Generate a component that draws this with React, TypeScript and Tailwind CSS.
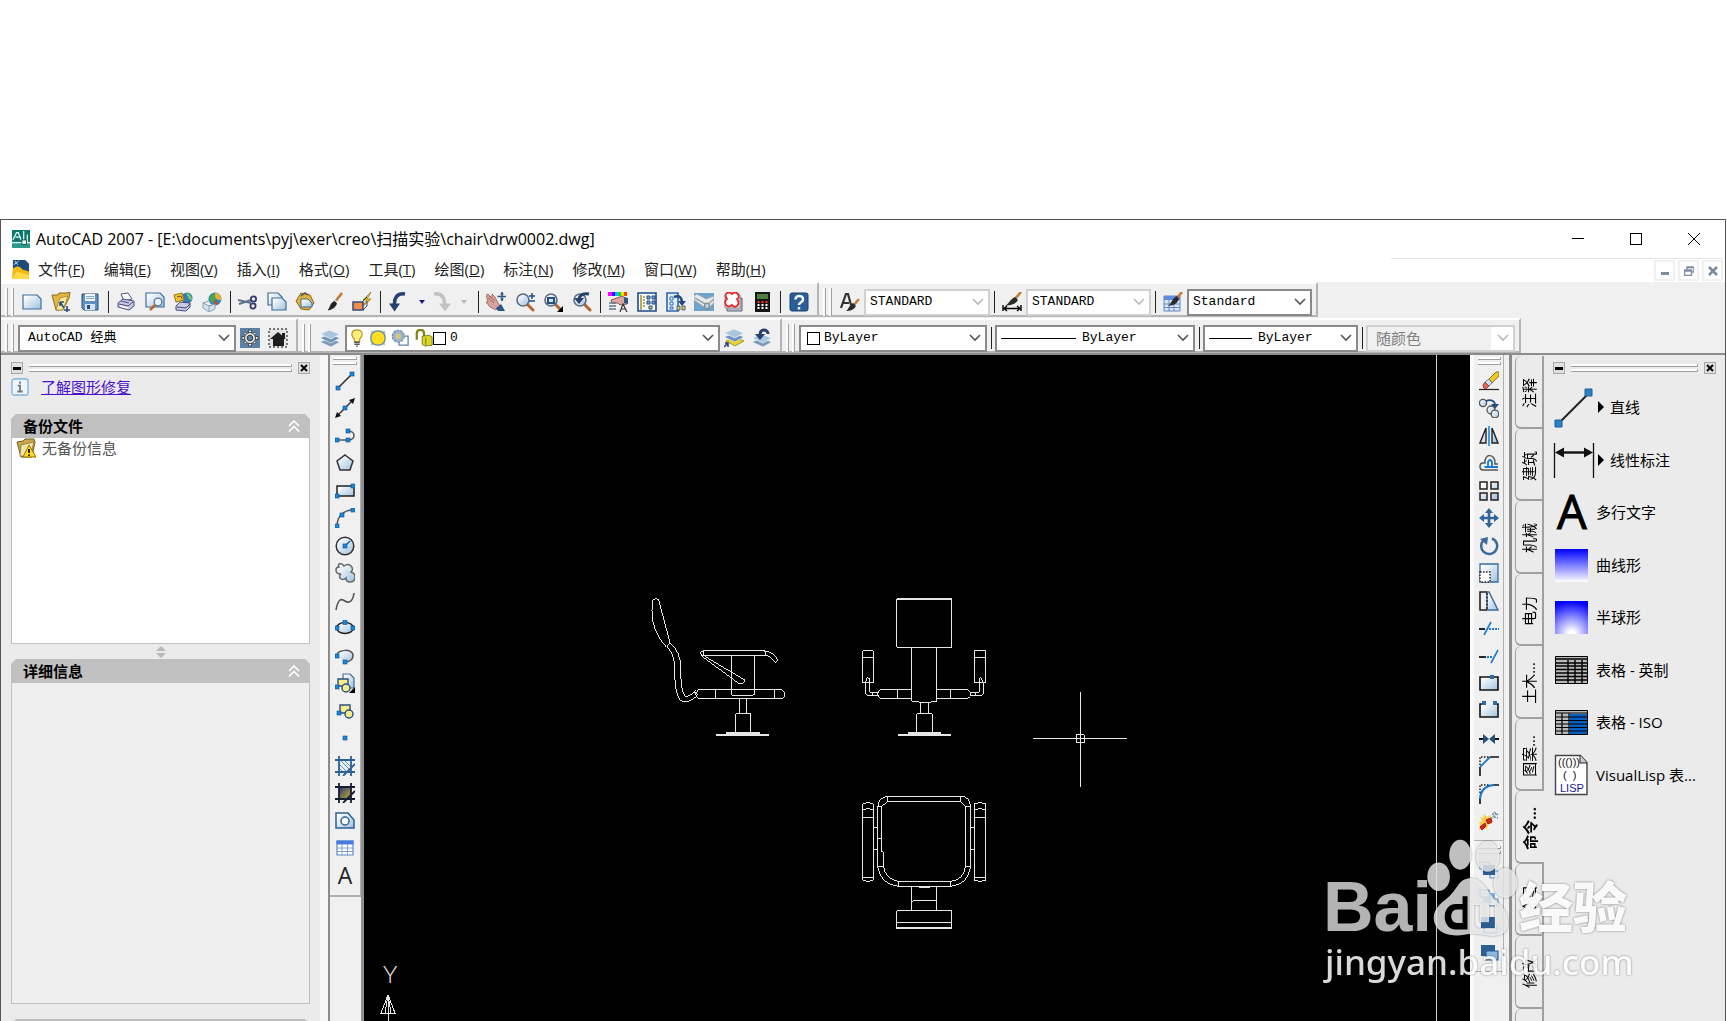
import React from "react";

const UI = "font-['Open_Sans','Noto_Sans_CJK_SC',sans-serif]";
const MONO = "font-['Liberation_Mono','Noto_Sans_CJK_SC',monospace]";

const dot = (x: number, y: number) => (
  <rect x={x - 2} y={y - 2} width="4" height="4" fill="#1a86dc" stroke="#0b4f8f" strokeWidth=".6" />
);

const sheet = (x: number, y: number, w: number, h: number) => (
  <path d={`M${x} ${y}h${w - 4}l4 4v${h - 4}h-${w}z`} fill="url(#pale)" stroke="#3f6e9c" strokeWidth="1.2" />
);

const magnifier = (
  <>
    <path d="M12.5 12.5l5.500 5.500" stroke="#b5652a" strokeWidth="3" strokeLinecap="round" />
    <circle cx="8" cy="8" r="6" fill="url(#pale)" stroke="#5d6d80" strokeWidth="1.600" />
  </>
);

const brush = (
  <>
    <path d="M19 1l-7 9" stroke="#c47a3a" strokeWidth="2.600" />
    <path d="M13 8l-2 3" stroke="#c9ced6" strokeWidth="3" />
    <path d="M11.500 9.500l2 2c-1 4-4 5-8 6.500c2-3 2-7 6-8.500z" fill="#222" stroke="#222" />
  </>
);

const calcKeys = [4, 8, 12].flatMap((x) => [10, 13, 16].map((y) => [x, y]));

const icons: Record<string, React.ReactNode> = {
  app: (
    <>
      <rect width="20" height="20" fill="#0f766b" />
      <path d="M0 13h20v7H0z" fill="#2c9b8e" />
      <path d="M1 11l4-8h2l3 8M4 8h6M13 1v12M0 14h20M17 5v10" stroke="#e6fffb" strokeWidth="1.300" fill="none" />
      <rect x="11" y="11" width="5" height="5" fill="#e6fffb" stroke="#0b5049" />
    </>
  ),
  drawing: (
    <>
      <path d="M2 0h13l4 4v10H2z" fill="#1d4a78" />
      <path d="M3 5l5-4M4 1l3 4" stroke="#cfe6fa" />
      <path d="M2 9c5-4 8-2 10 1l7 2v8H1z" fill="#f2b90f" />
      <path d="M1 20l5-8 13 4v4z" fill="#ffd94a" />
    </>
  ),
  new: sheet(1, 3, 18, 14),
  open: (
    <>
      <path d="M1 3h6l1-2h8l3-1-1 6-6 12H5z" fill="#e2b548" stroke="#8a6a1c" />
      <path d="M9 6l8-2-5 14H5z" fill="#fbe9a0" stroke="#a98328" strokeWidth=".8" />
      <path d="M9 10l4 6M9 10v4M9 10h4M13 18h6M16 14v6" stroke="#27507e" strokeWidth="1.600" />
    </>
  ),
  save: (
    <>
      <path d="M2 2h16v16H4l-2-2z" fill="#5f8fbc" stroke="#274f7c" />
      <path d="M5 2h10v7H5z" fill="#f2f8fd" />
      <path d="M6 4.500h8M6 6.500h8" stroke="#7ea3c8" />
      <path d="M5 12h10v6H5z" fill="#d4e3f1" />
      <path d="M7 13h3v4H7z" fill="#274f7c" />
    </>
  ),
  print: (
    <>
      <path d="M5 2l7-1 4 6-8 2z" fill="#fff" stroke="#50508c" />
      <path d="M2 11l5-4 11 2v5l-5 4L2 15z" fill="#c9cbe0" stroke="#4a4a85" />
      <path d="M3 12l9 2 5-4M5 9l8 2" stroke="#4a4a85" fill="none" />
      <path d="M4 14l8 2" stroke="#fff" strokeWidth="1.500" />
    </>
  ),
  preview: (
    <>
      {sheet(1, 1, 18, 14)}
      <circle cx="13" cy="10" r="3.800" fill="#e8f3fc" stroke="#60758b" strokeWidth="1.300" />
      <path d="M10 13l-5 5" stroke="#b5652a" strokeWidth="2.500" />
    </>
  ),
  publish: (
    <>
      <circle cx="14" cy="6" r="5.500" fill="#2e7fb5" />
      <path d="M13 1c4 1 6 4 6 7l-3-1z" fill="#8cc56b" />
      <path d="M1 3l8-2 2 7-8 2z" fill="#f0c633" stroke="#9b7410" />
      <path d="M4 5l4-1 1 3" stroke="#8a4a10" fill="none" />
      <path d="M3 14l4-4 10 1v4l-4 4-10-1z" fill="#c7cae0" stroke="#45457d" />
      <path d="M4 15l9 1 4-4" stroke="#45457d" fill="none" />
    </>
  ),
  web: (
    <>
      <circle cx="13" cy="7" r="6.500" fill="#2d83bf" />
      <path d="M13 .5c5 1 7 5 6 8l-6-2z" fill="#e9b12c" />
      <path d="M7 5l5-4 2 6-4 5z" fill="#4ba553" />
      <path d="M12 8l5 4-5 1z" fill="#cc4a2c" />
      <path d="M1 11l6 3 6-2v5l-6 3-6-4z" fill="#d5e3ec" stroke="#8aa1b1" />
      <path d="M1 11l6-2M7 14v6M7 14l6-2" stroke="#8aa1b1" fill="none" />
    </>
  ),
  cut: (
    <>
      <path d="M0 8l13 3M1 12l12-4" stroke="#60718e" strokeWidth="2" />
      <circle cx="15.500" cy="7" r="2.600" fill="none" stroke="#383871" strokeWidth="1.800" />
      <circle cx="15" cy="14" r="2.600" fill="none" stroke="#383871" strokeWidth="1.800" />
    </>
  ),
  copy: (
    <>
      {sheet(1, 1, 14, 12)}
      {sheet(5, 6, 14, 12)}
    </>
  ),
  paste: (
    <>
      <path d="M6 1l9 2 4 8-5 7-8-1-5-8z" fill="#e0b13f" stroke="#88651c" />
      <path d="M6 4l4-3 3 2" stroke="#555" fill="none" strokeWidth="1.500" />
      <path d="M6 7h7l4 4v4H6z" fill="url(#pale)" stroke="#3f6e9c" />
    </>
  ),
  match: brush,
  block: (
    <>
      <path d="M19 0l-8 8h4l-5 7 9-8h-4z" fill="#f4c81e" stroke="#9b7410" strokeWidth=".8" />
      <path d="M1 10h10v8H1z" fill="#f08c4a" stroke="#2f4b78" strokeWidth="1.500" />
      <path d="M10 10l5-5M15 9v5l-4 4" fill="none" stroke="#2f4b78" />
    </>
  ),
  undo: (
    <>
      <path d="M17 2C9 1 6 6 6.500 13" stroke="#27406e" strokeWidth="3.500" fill="none" />
      <path d="M1 11.500h11l-5.500 8z" fill="#27406e" />
    </>
  ),
  redo: (
    <>
      <path d="M1 2c8-1 11 4 10.500 11" stroke="#c2c2c2" strokeWidth="3.500" fill="none" />
      <path d="M6 11.500h12l-6 8z" fill="#c2c2c2" />
    </>
  ),
  pan: (
    <>
      <path d="M0 3l2-1 4 4V2l3 3 3 6 2 3-4 4-6-3-4-5 2 0z" fill="#d8a39b" stroke="#93605a" strokeWidth=".8" />
      <path d="M2 6l6 5M3 4l6 5" stroke="#93605a" strokeWidth=".8" />
      <path d="M10 16l5-4 4 7h-7z" fill="#2c5684" />
      <path d="M16 0v9M11.500 4.500h8.500" stroke="#2c5684" strokeWidth="1.500" />
      <path d="M14 2.500l2-2.500 2 2.500M14 6.500l2 2.500 2-2.500" fill="#2c5684" />
    </>
  ),
  zoomRt: (
    <>
      {magnifier}
      <path d="M14 4h6M17 1v6M14 9h6" stroke="#1f4f85" strokeWidth="1.500" />
    </>
  ),
  zoomWin: (
    <>
      {magnifier}
      <path d="M5 6h6v5H5z" fill="none" stroke="#27507e" strokeWidth="2" />
      <path d="M20 14v6h-6z" fill="#000" />
    </>
  ),
  zoomPrev: (
    <>
      {magnifier}
      <path d="M17 2c-5-1-9 0-10 5" stroke="#27406e" strokeWidth="3" fill="none" />
      <path d="M2 6h10l-5 6z" fill="#27406e" />
    </>
  ),
  props: (
    <>
      <path d="M0 0h4v4H0z" fill="#f0f" />
      <path d="M4 0h3v4H4z" fill="#40f" />
      <path d="M7 0h3v4H7z" fill="#0bf" />
      <path d="M10 0h3v4h-3z" fill="#0d4" />
      <path d="M13 0h3v4h-3z" fill="#fd0" />
      <path d="M16 0h3v4h-3z" fill="#f40" />
      <path d="M3 8l6-2 5-2 5 3v5l-7 1-2-2H4z" fill="#dba79e" stroke="#7d4a45" strokeWidth=".9" />
      <path d="M16 5l4 1v6l-4-1z" fill="#2c5684" />
      <path d="M1 11h7M1 14h7M1 17h7" stroke="#5c7896" strokeWidth="1.500" />
      <path d="M12 20l3-8 4 8M13 17h5" stroke="#333" strokeWidth="1.200" fill="none" />
    </>
  ),
  design: (
    <>
      <path d="M1 1h18v18H1z" fill="#f3f8fd" stroke="#214a80" strokeWidth="1.600" />
      <path d="M4 3v15M6 5h2M6 8h2M6 11h2M6 14h2" stroke="#a89023" strokeWidth="1.500" />
      <path d="M10 4h3v3h-3zM15 4h3v3h-3zM10 9h3v3h-3zM15 9h3v3h-3z" fill="#7fa9d4" stroke="#214a80" />
      <path d="M12 14h3v3h-3z" fill="#e8cc37" stroke="#214a80" />
    </>
  ),
  palettes: (
    <>
      <path d="M1 1h11v18H1z" fill="#e2eefb" stroke="#2c66ac" strokeWidth="1.600" />
      <path d="M4 5h3v3H4zM4 10h3v3H4zM4 15h3v2H4z" fill="#fff" stroke="#2c66ac" />
      <path d="M8 5c6-2 8 1 8 6" stroke="#214a80" strokeWidth="2.500" fill="none" />
      <path d="M12 9h8l-4 5z" fill="#214a80" />
      <path d="M11 14h3v4h-3zM16 14h3v4h-3z" fill="#e8cc37" stroke="#214a80" strokeWidth=".8" />
    </>
  ),
  sheetset: (
    <>
      <path d="M0 1h20v18H0z" fill="#6fa3cc" />
      <path d="M0 4l3-2 9 5 8-3v7l-7 6L0 8z" fill="#e6eaec" stroke="#a3adb3" />
      <path d="M1 6l12 7 7-6" stroke="#9aa5ac" fill="none" strokeWidth="1.500" />
      <ellipse cx="13" cy="14" rx="2.500" ry="3" fill="#c2cacf" stroke="#6a7a85" />
    </>
  ),
  markup: (
    <>
      <path d="M4 6h15v13H4z" fill="#b3bac3" stroke="#5b6672" />
      <path d="M2 3h15v13H2z" fill="#f6f0f0" stroke="#89919c" />
      <path d="M4 1q3-1 5 1q3-3 6 0q2 4-1 5q3 4 0 7q-3 2-5-1q-3 3-6 0q-2-4 1-6q-3-4 0-6z" fill="#fff" stroke="#e32828" strokeWidth="1.800" />
    </>
  ),
  calc: (
    <>
      <path d="M3 0h15v20H3z" fill="#161616" />
      <path d="M5 2h11v5H5z" fill="#4e7d3f" />
      {calcKeys.map(([x, y]) => (
        <rect key={`${x}-${y}`} x={x + 1.5} y={y - 1} width="2" height="2" fill={y === 10 ? "#f33" : "#fff"} />
      ))}
    </>
  ),
  help: (
    <>
      <rect x="1" y="1" width="18" height="18" rx="2" fill="#2a5f98" stroke="#1c426e" />
      <path d="M6.500 7.500c0-5 8-4.500 7.500 0c0 3-4 2.500-4 5.500M10 15v2.500" stroke="#fff" strokeWidth="2.400" fill="none" />
    </>
  ),
  textStyle: (
    <>
      <path d="M1 16L6 2h2l3 11M3 11h6" stroke="#333" strokeWidth="2.200" fill="none" />
      <path d="M19 7l-6 7" stroke="#c47a3a" strokeWidth="2.500" />
      <path d="M13 11l3 3c-2 4-6 5-10 5c3-2 3-6 7-8z" fill="#2b2b2b" />
    </>
  ),
  dimStyle: (
    <>
      <path d="M19 0l-6 7" stroke="#c47a3a" strokeWidth="2.600" />
      <path d="M13 5l3 3c-2 4-7 5-13 6c4-2 5-7 10-9z" fill="#2b2b2b" />
      <path d="M1 13v6M19 13v6M2 16.500h16M5 14l-3 2.500 3 2.500M15 14l3 2.500-3 2.500" stroke="#000" strokeWidth="1.400" fill="none" />
    </>
  ),
  tableStyle: (
    <>
      <path d="M1 4h16v15H1z" fill="#dbe8fa" stroke="#5f86c8" />
      <path d="M1 4h16v4H1z" fill="#5f8be0" />
      <path d="M1 12h16M1 15.500h16M6 8v11M11 8v11" stroke="#5f86c8" />
      <path d="M19 0l-5 6" stroke="#c47a3a" strokeWidth="2.600" />
      <path d="M14 4l2 3c-2 5-5 6-11 7c4-3 4-8 9-10z" fill="#2b2b2b" />
    </>
  ),
  gear: (
    <>
      <path d="M0 0h20v20H0z" fill="#5c81a6" />
      <path d="M8.500 2h3v16h-3zM2 8.500h16v3H2zM4 5.500L5.500 4 16 14.500 14.500 16zM14.500 4L16 5.500 5.500 16 4 14.500z" fill="#ececec" stroke="#333" strokeWidth=".8" />
      <circle cx="10" cy="10" r="5.500" fill="#e0e4e8" stroke="#444" />
      <circle cx="10" cy="10" r="2.800" fill="#5c81a6" stroke="#333" />
    </>
  ),
  home: (
    <>
      <rect x="1" y="1" width="18" height="18" fill="#e4e4e4" stroke="#777" strokeWidth="2" strokeDasharray="2 2" />
      <path d="M10 4l8 7h-2v7H5v-7H2z" fill="#1d1d1d" />
      <path d="M14 5h3v5h-3z" fill="#1d1d1d" />
    </>
  ),
  layers: (
    <>
      <path d="M0 14l9-4 11 4-9 5z" fill="#7d9bb8" stroke="#fff" strokeWidth=".6" />
      <path d="M0 10l9-4 11 4-9 5z" fill="#6d93b8" stroke="#fff" strokeWidth=".6" />
      <path d="M0 6l9-4 11 4-9 5z" fill="#a9c6df" stroke="#fff" strokeWidth=".6" />
    </>
  ),
  layerCur: (
    <>
      <path d="M2 13l9-4 9 4-9 5z" fill="#e8cf2d" stroke="#9a8a1a" strokeWidth=".8" />
      <path d="M0 9l10-4 10 4-9 5z" fill="#6d93b8" stroke="#fff" strokeWidth=".6" />
      <path d="M0 5l10-4 10 4-9 5z" fill="#a9c6df" stroke="#fff" strokeWidth=".6" />
      <path d="M0 19l4-4M1 15h3v4" stroke="#204070" strokeWidth="1.500" fill="none" />
    </>
  ),
  layerPrev: (
    <>
      <path d="M0 14l9-4 11 4-9 5z" fill="#7d9bb8" stroke="#fff" strokeWidth=".6" />
      <path d="M0 10l9-4 11 4-9 5z" fill="#a9c6df" stroke="#fff" strokeWidth=".6" />
      <path d="M16 6c0-5-8-6-8 1" stroke="#27406e" strokeWidth="3" fill="none" />
      <path d="M3 6h10l-5 6z" fill="#27406e" />
    </>
  ),
  bulb: (
    <>
      <path d="M10 1c7 0 7 7 3 10v3H7v-3C3 8 3 1 10 1z" fill="#ffef7a" stroke="#b49321" strokeWidth="1.200" />
      <path d="M7 15h6M7 17h6M9 19h2" stroke="#4f5966" strokeWidth="1.500" />
    </>
  ),
  sun: (
    <>
      <path d="M2 2h16v16H2z" fill="#b7c9b7" />
      <circle cx="10" cy="10" r="8" fill="#ffdf1e" stroke="#5d8aa8" strokeWidth="1.400" />
    </>
  ),
  vpFreeze: (
    <>
      <path d="M9 8h10v10H9z" fill="#fff" stroke="#5d86ad" strokeWidth="1.400" />
      <circle cx="8" cy="8" r="6.500" fill="#9cb5c9" stroke="#7290ab" strokeWidth="1.500" strokeDasharray="3 1" />
      <circle cx="8" cy="8" r="3" fill="#d6c77a" />
    </>
  ),
  lock: (
    <>
      <path d="M2 12V5q0-4 4-4t4 4v3" fill="none" stroke="#83831a" strokeWidth="2.500" />
      <path d="M8 8l8-1 3 2v9l-8 1-3-2z" fill="#d7d52a" stroke="#77761a" />
      <path d="M12 10v8" stroke="#77761a" />
    </>
  ),
  line: (
    <>
      <path d="M3 17L17 3" stroke="#333" strokeWidth="1.600" />
      {dot(3, 17)}
      {dot(17, 3)}
    </>
  ),
  xline: (
    <>
      <path d="M2 18L18 2" stroke="#333" strokeWidth="1.400" />
      <path d="M20 0l-2 6-4-4zM0 20l2-6 4 4z" fill="#111" />
      {dot(10, 10)}
    </>
  ),
  pline: (
    <>
      <path d="M2 14h11c8 0 8-9 0-9" stroke="#555" strokeWidth="1.500" fill="none" />
      {dot(2, 14)}
      {dot(13, 14)}
      {dot(13, 5)}
    </>
  ),
  polygon: <path d="M10 2l8 6-3 9H5L2 8z" fill="url(#pale)" stroke="#333" strokeWidth="1.500" />,
  rect: (
    <>
      <path d="M2 5h17v10H2z" fill="url(#pale)" stroke="#222" strokeWidth="1.500" />
      {dot(2, 15)}
      {dot(18, 5)}
    </>
  ),
  arc: (
    <>
      <path d="M2 18C2 9 8 2 18 2" stroke="#555" strokeWidth="1.500" fill="none" />
      {dot(2, 18)}
      {dot(7, 7)}
      {dot(18, 2)}
    </>
  ),
  circle: (
    <>
      <circle cx="10" cy="10" r="8.800" fill="url(#pale)" stroke="#333" strokeWidth="1.500" />
      <path d="M10 10l5-5" stroke="#1a5fa8" strokeWidth="1.500" />
      {dot(10, 10)}
    </>
  ),
  cloud: (
    <path
      d="M4 1q3-1 5 2q4-3 7 0q3 3 0 6q4 1 4 5q0 5-5 5q-4 0-4-4q-3 3-6 0q-1-3 1-4q-5 0-5-4q0-3 3-3q-1-2 0-3z"
      fill="url(#pale)"
      stroke="#666"
      strokeWidth="1.500"
    />
  ),
  spline: <path d="M1 19C3 8 6 7 10 10s8 0 9-8" stroke="#555" strokeWidth="1.600" fill="none" />,
  ellipse: (
    <>
      <ellipse cx="10" cy="10" rx="8.500" ry="5.500" fill="url(#pale)" stroke="#222" strokeWidth="1.500" />
      {dot(2, 10)}
      {dot(18, 10)}
      {dot(10, 4.5)}
    </>
  ),
  ellipseArc: (
    <>
      <path d="M2 10C1 3 19 2 18 10c0 4-4 6-8 6" fill="url(#pale)" stroke="#555" strokeWidth="1.500" />
      {dot(2, 10)}
      {dot(10, 16)}
    </>
  ),
  insert: (
    <>
      {sheet(8, 1, 11, 14)}
      <path d="M3 6h10v7H3z" fill="#f5ec8d" stroke="#27507e" strokeWidth="1.400" />
      <circle cx="11" cy="15" r="4" fill="#f5ec8d" stroke="#27507e" strokeWidth="1.400" />
      {dot(2, 14)}
      <path d="M20 14v6h-6z" fill="#000" />
    </>
  ),
  makeBlock: (
    <>
      <path d="M5 4h10v8H5z" fill="#f5ec8d" stroke="#27507e" strokeWidth="1.400" />
      <circle cx="14" cy="13" r="4" fill="#f5ec8d" stroke="#27507e" strokeWidth="1.400" />
      {dot(4, 12)}
    </>
  ),
  point: dot(10, 10),
  hatch: (
    <>
      <path d="M4 4h12v12H4z" fill="#e5eef6" />
      <path d="M5 4l11 11M4 8l8 8M9 4l7 7M4 12l4 4" stroke="#6f8fae" />
      <path d="M4 0v20M16 0v20M0 4h20M0 16h20M20 8L8 20" stroke="#2c6196" strokeWidth="1.800" fill="none" />
    </>
  ),
  gradient: (
    <>
      <path d="M4 4h12v12H4z" fill="url(#dusk)" />
      <path d="M4 0v20M16 0v20M0 4h20M0 16h20M20 8L8 20" stroke="#141d33" strokeWidth="1.800" fill="none" />
    </>
  ),
  region: (
    <>
      <path d="M1 2h12l6 7v8H1z" fill="url(#pale)" stroke="#2c6196" strokeWidth="1.500" />
      <circle cx="10" cy="10" r="4" fill="#fff" stroke="#2c6196" strokeWidth="1.500" />
    </>
  ),
  table: (
    <>
      <path d="M2 3h16v14H2z" fill="#fff" stroke="#5f86c8" strokeWidth="1.200" />
      <path d="M1.500 2.500h17v4h-17z" fill="#4c7be0" />
      <path d="M2 10h16M2 13.500h16M7 6v11M12.500 6v11" stroke="#86a2cc" />
    </>
  ),
  erase: (
    <>
      <path d="M0 18.500h20" stroke="#222" strokeWidth="1.200" />
      <path d="M10 8L17 1h3v4l-7 7z" fill="#f0c52a" stroke="#7d6a1c" strokeWidth=".9" />
      <path d="M10 8l3 4-3 3-4-4z" fill="#d5e2ee" stroke="#4d6c8b" strokeWidth=".8" />
      <path d="M6 11l4 4-3 3q-3 0-3-4z" fill="#e2675a" stroke="#8a3128" strokeWidth=".8" />
    </>
  ),
  copyObj: (
    <>
      <circle cx="4" cy="5" r="3.600" fill="url(#pale)" stroke="#555" strokeWidth="1.300" />
      <path d="M7 3c5-2 9 0 9 4" stroke="#214a80" strokeWidth="1.800" fill="none" />
      <path d="M12 6h8l-4 5z" fill="#214a80" />
      <circle cx="12" cy="12" r="4" fill="url(#pale)" stroke="#555" strokeWidth="1.300" />
      <circle cx="16" cy="16" r="3.800" fill="url(#pale)" stroke="#555" strokeWidth="1.300" />
    </>
  ),
  mirror: (
    <>
      <path d="M7 2v15H1zM13 2v15h6z" fill="url(#pale)" stroke="#222" strokeWidth="1.400" />
      <path d="M10 0v20" stroke="#1a86dc" strokeWidth="1.600" />
    </>
  ),
  offset: (
    <>
      <path d="M19 11h-3c1-11-11-11-10-1H4q-3 0-3 3.500T4 17h15" fill="none" stroke="#555" strokeWidth="1.500" />
      <path d="M19 14H5.500M9 13V9q2-4 4 0v4" fill="none" stroke="#1a7bd0" strokeWidth="1.800" />
    </>
  ),
  array: (
    <path d="M1 1h7v7H1zM12 1h7v7h-7zM1 12h7v7H1zM12 12h7v7h-7z" fill="url(#pale)" stroke="#222" strokeWidth="1.500" />
  ),
  move: (
    <>
      <path d="M10 2v16M2 10h16" stroke="#2f6599" strokeWidth="2.600" />
      <path d="M10 0l4 5H6zM10 20l4-5H6zM0 10l5-4v8zM20 10l-5-4v8z" fill="#2f6599" />
    </>
  ),
  rotate: (
    <>
      <path d="M13 2.500a8 8 0 1 1-7.500 1" fill="none" stroke="#3c6a98" strokeWidth="2.500" />
      <path d="M1 3l8-2-1 8z" fill="#3c6a98" />
    </>
  ),
  scale: (
    <>
      <path d="M1 1h18v18H1z" fill="url(#pale)" stroke="#3c6a98" strokeWidth="1.300" />
      <path d="M1 9h10v10H1z" fill="#fff" stroke="#222" strokeWidth="1.400" strokeDasharray="1.500 1.500" />
    </>
  ),
  stretch: (
    <>
      <path d="M8 1h2l9 18H8z" fill="url(#pale)" stroke="#3c6a98" strokeWidth="1.400" />
      <path d="M8 1H1v18h7" fill="none" stroke="#222" strokeWidth="1.600" />
      <path d="M8 2v17" stroke="#222" strokeWidth="1.400" strokeDasharray="2 1.500" />
    </>
  ),
  trim: (
    <>
      <path d="M0 10h6" stroke="#111" strokeWidth="1.800" />
      <path d="M5 16L12 3" stroke="#1a7bd0" strokeWidth="1.600" />
      <path d="M10 10h10" stroke="#1a7bd0" strokeWidth="1.800" strokeDasharray="2 1" />
    </>
  ),
  extend: (
    <>
      <path d="M0 11h7" stroke="#111" strokeWidth="1.800" />
      <path d="M12 17l7-13" stroke="#1a7bd0" strokeWidth="1.600" />
      <path d="M8 11h6" stroke="#1a7bd0" strokeWidth="1.800" strokeDasharray="2 1" />
    </>
  ),
  breakPt: (
    <>
      <path d="M1 3h18v13H1z" fill="url(#pale)" stroke="#111" strokeWidth="1.600" />
      <path d="M11 1h4v4h-4z" fill="#2c6ba5" />
    </>
  ),
  breakObj: (
    <>
      <path d="M2 3h16v13H2z" fill="url(#pale)" />
      <path d="M4 3H1v13h18V3h-3" fill="none" stroke="#111" strokeWidth="1.600" />
      <path d="M3 0h4v4H3zM14 0h4v4h-4z" fill="#2c6ba5" />
    </>
  ),
  join: (
    <>
      <path d="M0 10h6M14 10h6" stroke="#111" strokeWidth="2.200" />
      <path d="M4 5l6 5-6 5zM16 5l-6 5 6 5z" fill="#27507e" />
    </>
  ),
  chamfer: (
    <>
      <path d="M1 20V11M11 1h9" stroke="#111" strokeWidth="1.600" />
      <path d="M1 11L11 1" stroke="#1a7bd0" strokeWidth="1.800" />
      <path d="M1 9V1h9" stroke="#111" strokeWidth="1.400" strokeDasharray="1.500 1.500" fill="none" />
    </>
  ),
  fillet: (
    <>
      <path d="M1 20v-6M14 1h6" stroke="#111" strokeWidth="1.600" />
      <path d="M1 15Q2 2 15 1" stroke="#1a7bd0" strokeWidth="2.200" fill="none" />
      <path d="M1 9V1h9" stroke="#111" strokeWidth="1.400" strokeDasharray="1.500 1.500" fill="none" />
    </>
  ),
  explode: (
    <>
      <path d="M1 6l3 1 1-4 3 3 4-2-1 5 2 4-4 0-1 6-3-3-5 3 1-5-1-3 3-1z" fill="#f7cf4a" />
      <path d="M1 16l5-4 1 3-4 4zM7 9l5-2 1 4-4 2z" fill="#d6261f" stroke="#a31712" />
      <path d="M12 8l5-5M15 1l4 3M15 6l4 1M13 3h5" stroke="#7590a8" strokeWidth="1.500" strokeDasharray="2 1" />
    </>
  ),
  orderFront: (
    <>
      <path d="M1 2h9v7H1zM11 11h8v7h-8z" fill="#e8f1f8" stroke="#5d9acb" strokeWidth="1.200" />
      <path d="M4 5h12v10H4z" fill="#2c5f94" />
    </>
  ),
  orderBack: (
    <>
      <path d="M4 5h12v10H4z" fill="#86b3da" />
      <path d="M1 2h9v7H1zM11 11h8v7h-8z" fill="#e8f1f8" stroke="#5d9acb" strokeWidth="1.200" />
    </>
  ),
  orderAbove: (
    <>
      <path d="M5 9h13v9H5z" fill="#e8f1f8" stroke="#5d9acb" strokeWidth="1.200" />
      <path d="M2 2h14v11H2z" fill="#2c5f94" />
    </>
  ),
  orderUnder: (
    <>
      <path d="M2 2h14v11H2z" fill="#2c5f94" />
      <path d="M7 8h12v9H7z" fill="#8fb9de" stroke="#2c6196" strokeWidth="1.200" />
    </>
  ),
  info: (
    <>
      <rect x="1" y="1" width="18" height="18" rx="3" fill="#eef6fd" stroke="#8fbbe4" strokeWidth="1.800" />
      <path d="M10 4v2.500M7.500 8.500H10V15M7 15h6" stroke="#777" strokeWidth="2" fill="none" />
    </>
  ),
  recover: (
    <>
      <path d="M1 4l6-1 2-2h9l1 3-3 15H5z" fill="#c9a64a" stroke="#776026" />
      <path d="M5 7l13-3-4 14H4z" fill="#f2e4b0" stroke="#8f7734" strokeWidth=".8" />
      <path d="M13 7l7 12H7z" fill="#ffdb1f" stroke="#8c7300" strokeLinejoin="round" />
      <path d="M13 11v4M13 16.500v1.500" stroke="#111" strokeWidth="1.800" />
    </>
  ),
};

function Icon({ name, className = "size-5" }: { name: string; className?: string }) {
  return (
    <svg viewBox="0 0 20 20" fill="none" className={`shrink-0 ${className}`} aria-hidden="true">
      {icons[name]}
    </svg>
  );
}

type Tool = [icon: string, label: string];

function ToolButton({ tool: [icon, label] }: { tool: Tool }) {
  return (
    <button type="button" aria-label={label} className="flex items-center justify-center">
      <Icon name={icon} />
    </button>
  );
}

function Tools({ items, className }: { items: Tool[]; className: string }) {
  return (
    <div className={`grid h-7 shrink-0 auto-cols-fr grid-flow-col ${className}`}>
      {items.map((t) => (
        <ToolButton key={t[0]} tool={t} />
      ))}
    </div>
  );
}

function ToolColumn({ items, className }: { items: Tool[]; className: string }) {
  return (
    <div className={`grid shrink-0 auto-rows-fr ${className}`}>
      {items.map((t) => (
        <ToolButton key={t[0]} tool={t} />
      ))}
    </div>
  );
}

const Separator = () => (
  <div className="flex w-2 shrink-0 justify-center">
    <div className="h-[22px] w-px bg-[#222]" />
  </div>
);

const Grip = () => (
  <div className="flex h-7 w-[17px] shrink-0 gap-[3px] pl-1">
    <div className="w-[3px] border-r border-l border-r-[#a0a0a0] border-l-white bg-[#f8f8f8]" />
    <div className="w-[3px] border-r border-l border-r-[#a0a0a0] border-l-white bg-[#f8f8f8]" />
  </div>
);

const FlatGrip = ({ className = "" }: { className?: string }) => (
  <div className={`flex flex-col gap-[2px] ${className}`}>
    <div className="h-[3px] border-r border-b border-[#a0a0a0] bg-white" />
    <div className="h-[3px] border-r border-b border-[#a0a0a0] bg-white" />
  </div>
);

function Bar({ children }: { children: React.ReactNode }) {
  return (
    <div className="flex h-[35px] shrink-0 items-center border-t-2 border-r-2 border-b-2 border-t-white border-r-[#b5b5b5] border-b-[#b5b5b5] bg-[#f0f0f0] pt-[5px] pr-1">
      {children}
    </div>
  );
}

interface ComboProps {
  label: string;
  value: string;
  className: string;
  soft?: boolean;
  lead?: React.ReactNode;
}

function Combo({ label, value, className, soft, lead }: ComboProps) {
  return (
    <div
      className={`flex h-[27px] shrink-0 items-center border-2 bg-white ${soft ? "border-[#d0d0d0]" : "border-[#8a8a8a]"} ${className}`}
    >
      {lead}
      <select aria-label={label} defaultValue={value} className={`min-w-0 flex-1 appearance-none bg-transparent text-[13px] leading-5 text-black ${MONO}`}>
        <option>{value}</option>
      </select>
      <Chevron soft={soft} />
    </div>
  );
}

const Chevron = ({ soft }: { soft?: boolean }) => (
  <svg viewBox="0 0 12 8" className={`pointer-events-none mr-1 h-2 w-3 shrink-0 ${soft ? "text-[#b8b8b8]" : "text-[#555]"}`} aria-hidden="true">
    <path d="M1 1l5 5 5-5" fill="none" stroke="currentColor" strokeWidth="1.600" />
  </svg>
);

const Swatch = () => <span className="mx-1 size-[13px] shrink-0 border border-black bg-white" />;

const Caret = ({ className }: { className: string }) => (
  <button type="button" aria-label="历史" className={`flex h-7 shrink-0 items-center justify-center ${className}`}>
    <svg viewBox="0 0 6 4" className="h-1 w-1.5" aria-hidden="true">
      <path d="M0 0h6L3 4z" fill="currentColor" />
    </svg>
  </button>
);

const menus: [string, string][] = [
  ["文件", "F"], ["编辑", "E"], ["视图", "V"], ["插入", "I"], ["格式", "O"], ["工具", "T"],
  ["绘图", "D"], ["标注", "N"], ["修改", "M"], ["窗口", "W"], ["帮助", "H"],
];

const drawTools: Tool[] = [
  ["line", "直线"], ["xline", "构造线"], ["pline", "多段线"], ["polygon", "正多边形"], ["rect", "矩形"],
  ["arc", "圆弧"], ["circle", "圆"], ["cloud", "修订云线"], ["spline", "样条曲线"], ["ellipse", "椭圆"],
  ["ellipseArc", "椭圆弧"], ["insert", "插入块"], ["makeBlock", "创建块"], ["point", "点"], ["hatch", "图案填充"],
  ["gradient", "渐变色"], ["region", "面域"], ["table", "表格"],
];

const modifyTools: Tool[] = [
  ["erase", "删除"], ["copyObj", "复制"], ["mirror", "镜像"], ["offset", "偏移"], ["array", "阵列"],
  ["move", "移动"], ["rotate", "旋转"], ["scale", "缩放"], ["stretch", "拉伸"], ["trim", "修剪"],
  ["extend", "延伸"], ["breakPt", "打断于点"], ["breakObj", "打断"], ["join", "合并"], ["chamfer", "倒角"],
  ["fillet", "圆角"], ["explode", "分解"],
];

const orderTools: Tool[] = [
  ["orderFront", "前置"], ["orderBack", "后置"], ["orderAbove", "置于对象之上"], ["orderUnder", "置于对象之下"],
];

const tabs = ["注释", "建筑", "机械", "电力", "土木...", "图案...", "命令...", "绘图", "修改", ""];

function TitleBar() {
  const button = "flex h-9 w-[58px] items-center justify-center";
  return (
    <header className="flex h-[38px] shrink-0 items-center bg-white pr-0.5 pb-px pl-[11px]">
      <Icon name="app" className="size-[18px]" />
      <h1 className={`ml-1.5 flex-1 text-base leading-5 text-black ${UI}`}>
        AutoCAD 2007 - [E:\documents\pyj\exer\creo\扫描实验\chair\drw0002.dwg]
      </h1>
      <button type="button" aria-label="最小化" className={button}>
        <span className="h-px w-3 bg-black" />
      </button>
      <button type="button" aria-label="最大化" className={button}>
        <span className="size-3 border border-black" />
      </button>
      <button type="button" aria-label="关闭" className={button}>
        <svg viewBox="0 0 12 12" className="size-3" aria-hidden="true">
          <path d="M0 0l12 12M12 0L0 12" stroke="#000" />
        </svg>
      </button>
    </header>
  );
}

function MenuBar() {
  const mdi = "flex size-[21px] items-center justify-center border-2 border-[#f0f0f0] text-[#7d8da0]";
  return (
    <div className="flex h-6 shrink-0 items-center justify-between bg-white pr-0.5 pl-2.5">
      <nav className={`flex items-center gap-[19px] pb-0.5 text-[15px] leading-5 text-[#222] ${UI}`}>
        <Icon name="drawing" className="-mr-[11px] size-[19px]" />
        {menus.map(([name, key]) => (
          <button key={key} type="button">
            {name}(<span className="underline">{key}</span>)
          </button>
        ))}
      </nav>
      <div className="flex h-full w-[332px] items-center justify-end gap-[3px] border-t border-[#e3e3e3]">
        <button type="button" aria-label="最小化图形" className={mdi}>
          <span className="mt-1.5 h-[3px] w-2 bg-current" />
        </button>
        <button type="button" aria-label="还原图形" className={mdi}>
          <svg viewBox="0 0 10 10" className="size-2.5" fill="none" stroke="currentColor" aria-hidden="true">
            <path d="M3 3V1h7v5H8M3 1.500h7" strokeWidth="1.500" />
            <path d="M.5 4h7v5.500h-7zM.5 5h7" strokeWidth="1.400" />
          </svg>
        </button>
        <button type="button" aria-label="关闭图形" className={mdi}>
          <svg viewBox="0 0 10 10" className="size-2.5" aria-hidden="true">
            <path d="M1 1l8 8M9 1L1 9" stroke="currentColor" strokeWidth="2.600" />
          </svg>
        </button>
      </div>
    </div>
  );
}

function Toolbars() {
  return (
    <div className="flex shrink-0 flex-col gap-px overflow-hidden bg-[#f0f0f0]">
      <div className="flex">
        <Bar>
          <Grip />
          <Tools className="w-[86px]" items={[["new", "新建"], ["open", "打开"], ["save", "保存"]]} />
          <Separator />
          <Tools className="w-[114px]" items={[["print", "打印"], ["preview", "打印预览"], ["publish", "发布"], ["web", "三维 DWF"]]} />
          <Separator />
          <Tools className="w-[142px]" items={[["cut", "剪切"], ["copy", "复制"], ["paste", "粘贴"], ["match", "特性匹配"], ["block", "块编辑器"]]} />
          <Separator />
          <Tools className="w-7" items={[["undo", "放弃"]]} />
          <Caret className="w-5 text-[#1c1c8c]" />
          <Tools className="w-[22px]" items={[["redo", "重做"]]} />
          <Caret className="w-5 text-[#b5b5c8]" />
          <Separator />
          <Tools className="w-[114px]" items={[["pan", "实时平移"], ["zoomRt", "实时缩放"], ["zoomWin", "窗口缩放"], ["zoomPrev", "缩放上一个"]]} />
          <Separator />
          <Tools
            className="w-[172px]"
            items={[["props", "特性"], ["design", "设计中心"], ["palettes", "工具选项板"], ["sheetset", "图纸集管理器"], ["markup", "标记集管理器"], ["calc", "快速计算器"]]}
          />
          <Separator />
          <Tools className="w-[29px]" items={[["help", "帮助"]]} />
        </Bar>
        <Bar>
          <Grip />
          <Tools className="w-7" items={[["textStyle", "文字样式"]]} />
          <Combo label="文字样式控制" value="STANDARD" soft className="w-[126px] pl-1" />
          <Separator />
          <Tools className="w-7" items={[["dimStyle", "标注样式"]]} />
          <Combo label="标注样式控制" value="STANDARD" soft className="w-[125px] pl-1" />
          <Separator />
          <Tools className="w-7" items={[["tableStyle", "表格样式"]]} />
          <Combo label="表格样式控制" value="Standard" className="w-[125px] pl-1" />
        </Bar>
      </div>
      <div className="flex">
        <Bar>
          <Grip />
          <Combo label="工作空间" value="AutoCAD 经典" className="w-[218px] pl-2" />
          <Tools className="w-14" items={[["gear", "工作空间设置"], ["home", "我的工作空间"]]} />
        </Bar>
        <Bar>
          <Grip />
          <Tools className="w-[30px]" items={[["layers", "图层特性管理器"]]} />
          <Combo
            label="图层"
            value="0"
            className="w-[375px]"
            lead={
              <>
                <Icon name="bulb" className="mx-px size-[18px]" />
                <Icon name="sun" className="mx-0.5 size-[18px]" />
                <Icon name="vpFreeze" className="mx-0.5 size-[18px]" />
                <Icon name="lock" className="ml-1 size-[18px]" />
                <span className="mr-1 size-[13px] shrink-0 border border-black bg-white" />
              </>
            }
          />
          <Tools className="w-14" items={[["layerCur", "将对象的图层置为当前"], ["layerPrev", "上一个图层"]]} />
        </Bar>
        <Bar>
          <Grip />
          <Combo label="颜色" value="ByLayer" className="w-[188px] pl-0.5" lead={<Swatch />} />
          <Separator />
          <Combo label="线型" value="ByLayer" className="w-[200px] pl-1" lead={<span className="mr-1.5 h-px w-[75px] bg-black" />} />
          <Separator />
          <Combo label="线宽" value="ByLayer" className="w-[155px] pl-1" lead={<span className="mr-1.5 h-px w-[43px] bg-black" />} />
          <Separator />
          <div className="flex h-[27px] w-[149px] shrink-0 items-center border-2 border-[#d0d0d0] bg-white">
            <select
              aria-label="打印样式"
              disabled
              defaultValue="随颜色"
              className={`h-full min-w-0 flex-1 appearance-none bg-[#f0f0f0] pl-2 text-[15px] text-[#808080] opacity-100 ${UI}`}
            >
              <option>随颜色</option>
            </select>
            <span className="w-1.5" />
            <Chevron soft />
          </div>
        </Bar>
      </div>
    </div>
  );
}

function PaneHeader() {
  const box = "flex size-3 shrink-0 items-center justify-center border border-[#a8a8a8] bg-[#e0e0e0]";
  return (
    <div className="flex items-center gap-1.5">
      <button type="button" aria-label="折叠面板" className={box}>
        <span className="h-[3px] w-2 bg-black" />
      </button>
      <FlatGrip className="flex-1" />
      <button type="button" aria-label="关闭面板" className={box}>
        <svg viewBox="0 0 8 8" className="size-2" aria-hidden="true">
          <path d="M1 1l6 6M7 1L1 7" stroke="#000" strokeWidth="2" />
        </svg>
      </button>
    </div>
  );
}

function SectionHeader({ title }: { title: string }) {
  return (
    <h2
      className={`flex h-[23px] shrink-0 items-center justify-between bg-[#c0c0c0] pr-2.5 pl-3 text-[15px] leading-5 font-bold text-black [clip-path:polygon(5px_0,calc(100%-5px)_0,100%_5px,100%_100%,0_100%,0_5px)] ${UI}`}
    >
      {title}
      {title && (
        <button type="button" aria-label={`折叠${title}`}>
          <svg viewBox="0 0 12 12" className="size-3" fill="none" stroke="#fff" strokeWidth="1.600" aria-hidden="true">
            <path d="M1 6l5-5 5 5M1 11.500l5-5 5 5" />
          </svg>
        </button>
      )}
    </h2>
  );
}

function RecoveryPane() {
  return (
    <aside className={`flex w-[329px] shrink-0 border-r-2 border-[#8c8c8c] bg-[#ebebeb] text-[15px] leading-5 ${UI}`}>
      <div className="flex min-w-0 flex-1 flex-col overflow-hidden pt-[7px] pr-2.5 pl-2.5">
        <PaneHeader />
        <p className="mt-1 flex h-[18px] shrink-0 items-center gap-3">
          <Icon name="info" className="size-[18px]" />
          <a href="#recovery" className="text-[#4a12cf] underline">
            了解图形修复
          </a>
        </p>
        <div className="h-[18px] shrink-0" />
        <SectionHeader title="备份文件" />
        <div className="h-[207px] shrink-0 border border-[#c0c0c0] bg-white px-1">
          <div className="flex items-center gap-1.5 text-[#555]">
            <Icon name="recover" />
            无备份信息
          </div>
        </div>
        <div className="flex h-[15px] shrink-0 items-center justify-center">
          <svg viewBox="0 0 10 12" className="h-3 w-2.5" fill="#b8b8b8" aria-hidden="true">
            <path d="M5 0l5 5H0zM5 12l5-5H0z" />
          </svg>
        </div>
        <SectionHeader title="详细信息" />
        <div className="h-[322px] shrink-0 border border-[#c0c0c0] bg-[#efefef]" />
        <div className="h-[15px] shrink-0" />
        <SectionHeader title="" />
      </div>
      <div className="w-2 bg-[#f7f7f7]" />
    </aside>
  );
}

function DrawToolbar() {
  return (
    <div className="flex w-[34px] shrink-0 flex-col border-r-[3px] border-[#909090] bg-[#f0f0f0]">
      <div className="flex flex-col border-r border-b-2 border-[#b0b0b0] pt-0.5">
        <FlatGrip className="mx-[3px]" />
        <ToolColumn className="mt-0.5 h-[495px]" items={drawTools} />
        <button type="button" aria-label="多行文字" className={`mb-1.5 h-[27px] text-[23px] leading-[27px] text-[#222] ${UI}`}>
          A
        </button>
      </div>
    </div>
  );
}

/* Three orthographic views of the chair plus the crosshair; units are thirds of a pixel. */
function Drawing() {
  return (
    <svg className="h-full min-w-0 flex-1" aria-label="椅子三视图" role="img" fill="none" stroke="#e6e6e6" shapeRendering="crispEdges">
      <g transform="translate(266 225) scale(.33333)" strokeWidth="3">
        <path d="M68 60q10-8 18 0l34 128l-10 14q-46-48-44-110zM120 190q32 22 32 75q0 70 14 84q8 4 32-18M112 202q22 20 22 65q0 75 16 92q16 18 50-10" />
        <path d="M192 335l12 10M205 329h245q14 0 14 14t-14 13H205l-9-13zM257 329v27M433 329v27M305 226v117q2 5 20 3h30q18 2 18-5V226" />
        <path d="M218 213h186l4 13H218l-8-6zM220 213v13M404 213q20-2 40 27l-8 8q-10-18-30-22M212 226l114 84l14 0 4-10-118-70" />
        <path d="M328 356v45M351 356v45M317 401h45v57h-45z" />
        <path d="M258 465h158M803 465h160M801 57h165M833 459h100M289 459h100" strokeWidth="6" />
        <path d="M801 56h165v146H801zM846 202v162h18l4 4h34l4-4h15V202M872 368v33M895 368v33M860 401h47v57h-47z" />
        <path d="M698 213h32v96h-32zM698 230l4 4h24l4-4M1033 213h34v96h-34zM1033 230l4 4h26l4-4" />
        <path d="M706 309v32l8 7h32M718 309v26l4 2h24M706 309l5-16 7 2v14M1060 309v32l-8 7h-32M1048 309v26l-4 2h-24M1060 309l-8-17-4 3v14M728 337v11M1038 337v11" />
        <path d="M846 329h-96l-6 8v12l8 7h94M921 329h92l8 8v12l-8 7h-92M803 329v27M962 329v27" />
        <path d="M774 649h218q28 0 29 30v184q-8 52-60 56H806q-54-6-62-56V679q2-28 30-30zM774 664h218M755 679v136h5v44q7 38 45 45h156q42-4 45-45V679M744 679h11M1006 679h15M774 649v15l-19 15M992 649v15l14 15M744 859h14M1004 859h17M805 904v15M962 904v15M744 775h11" />
        <path d="M698 672q15-9 32 0v228q-15 9-32 0zM698 690q15-9 32 0M698 713h32M698 892h32M1033 672q16-9 34 0v228q-16 9-34 0zM1033 690q16-9 34 0M1033 713h34M1033 892h34" />
        <path d="M730 742h14M730 809h14M1021 742h12M1021 809h12M846 919v74M921 919v74M846 966l4-3h28l4-4 4 4h31l4 4M801 993h165v54H801zM801 1027h165" />
        <path d="M801 1044h165M866 921h34" strokeWidth="6" />
        <path d="M1351 336v284M1208 476h284M1339 464h24v24h-24z" />
      </g>
      <path d="M24 640v40M24 640l-7 18h14zM24 640l-3 18M24 640l3 18" />
      <text x="19" y="628" fontSize="24" fill="#e6e6e6" stroke="none" className="font-['Lato',sans-serif] font-light">
        Y
      </text>
    </svg>
  );
}

function ModifyToolbars() {
  return (
    <div className="flex w-[42px] shrink-0 flex-col border-r-[3px] border-l-4 border-r-[#8c8c8c] border-l-[#fafafa] bg-[#f0f0f0] pr-[5px]">
      <div className="flex flex-col border-r border-b border-[#b0b0b0] pt-0.5 pb-[5px]">
        <FlatGrip className="mr-0.5 ml-1" />
        <ToolColumn className="mt-0.5 h-[468px]" items={modifyTools} />
      </div>
      <div className="flex flex-col border-r border-b border-[#b0b0b0] pt-[5px] pb-1">
        <FlatGrip className="mr-0.5 ml-1" />
        <ToolColumn className="mt-0.5 h-[111px]" items={orderTools} />
      </div>
    </div>
  );
}

function PaletteTabs() {
  return (
    <div className="w-8 shrink-0 overflow-hidden pt-px pl-[3px]">
      <div className="grid h-[725px] auto-rows-fr" role="tablist">
        {tabs.map((t) => {
          const active = t === "命令...";
          return (
            <button
              key={t}
              type="button"
              role="tab"
              aria-selected={active}
              aria-label={t || "更多"}
              className={`flex items-center justify-center rounded-l-md border-b-2 border-l border-[#a0a0a0] pt-1 ${active ? "" : "border-r-2"}`}
            >
              <span
                className={`rotate-180 text-[15px] leading-5 text-black [text-orientation:sideways] [writing-mode:vertical-rl] ${UI} ${active ? "font-bold" : ""}`}
              >
                {t}
              </span>
            </button>
          );
        })}
      </div>
    </div>
  );
}

const LISP = "font-['Liberation_Sans',sans-serif]";

const paletteArt: { label: string; flyout?: boolean; art: React.ReactNode }[] = [
  {
    label: "直线",
    flyout: true,
    art: (
      <>
        <path d="M4 36L34 6" stroke="#222" strokeWidth="2" />
        <path d="M0 33h7v7H0zM30 2h7v7h-7z" fill="#2f7fc4" stroke="#1c5f9c" />
      </>
    ),
  },
  {
    label: "线性标注",
    flyout: true,
    art: (
      <>
        <path d="M-.5 3v35M38.500 3v35" stroke="#111" strokeWidth="1.300" />
        <path d="M4 12.500h30" stroke="#111" strokeWidth="2.400" />
        <path d="M0 12.500l9-5v10zM38 12.500l-9-5v10z" fill="#111" />
      </>
    ),
  },
  {
    label: "多行文字",
    art: (
      <text x="2" y="37" fontSize="47" fill="#000" stroke="#000" strokeWidth="1" className="font-['Open_Sans',sans-serif]">
        A
      </text>
    ),
  },
  { label: "曲线形", art: <path d="M0 4h33v33H0z" fill="url(#curved)" /> },
  { label: "半球形", art: <path d="M0 4h33v33H0z" fill="url(#hemi)" /> },
  {
    label: "表格 - 英制",
    art: (
      <>
        <path d="M.5 6.500h32v27H.5z" fill="#b8b8b8" stroke="#000" />
        <path d="M0 9h33M0 13h33M0 16h33M0 19.500h33M0 23h33M0 26.500h33M0 30h33M13 10v23M20 10v23M27 10v23" stroke="#000" strokeWidth="1.400" />
      </>
    ),
  },
  {
    label: "表格 - ISO",
    art: (
      <>
        <path d="M.5 8.500h32v24H.5z" fill="#b8b8b8" stroke="#000" />
        <path d="M15 12h17v20H15z" fill="#0a5fc4" />
        <path d="M0 11h33M0 15h33M0 18.500h33M0 22h33M0 25.500h33M0 29h33M7 11v21M14 11v21" stroke="#000" strokeWidth="1.200" />
      </>
    ),
  },
  {
    label: "VisualLisp 表...",
    art: (
      <>
        <path d="M.5.5h25l6.500 7v32H.5z" fill="#fff" stroke="#444" strokeWidth="1.400" />
        <path d="M25 0v8h7" fill="#ccc" stroke="#222" />
        <text x="3" y="11" fontSize="11" fill="#111" className={LISP}>((()))</text>
        <text x="8" y="24" fontSize="11" fill="#111" className={LISP}>(&nbsp;&nbsp;)</text>
        <text x="5" y="37" fontSize="11" fill="#14149a" className={LISP}>LISP</text>
      </>
    ),
  },
];

function ToolPalette() {
  return (
    <aside className={`flex min-w-0 flex-1 flex-col overflow-hidden pt-[7px] pr-[9px] pl-[9px] text-[15px] leading-5 text-black ${UI}`}>
      <PaneHeader />
      <ul className="mt-[7px] grid h-[420px] shrink-0 auto-rows-fr">
        {paletteArt.map(({ label, flyout, art }) => (
          <li key={label} className="flex">
            <button type="button" className="flex flex-1 items-center pl-0.5 text-left whitespace-nowrap">
              <svg viewBox="0 0 40 40" className="size-10 shrink-0 overflow-visible" fill="none" aria-hidden="true">
                {art}
              </svg>
              {flyout ? (
                <svg viewBox="0 0 6 12" className="mr-1.5 ml-[3px] h-3 w-1.5" aria-hidden="true">
                  <path d="M0 0l6 6-6 6z" />
                </svg>
              ) : (
                <span className="w-px" />
              )}
              {label}
            </button>
          </li>
        ))}
      </ul>
    </aside>
  );
}

function Watermark() {
  return (
    <div className="pointer-events-none absolute right-[90px] bottom-[37px] w-[312px] text-white">
      <div className="flex h-[96px] items-end drop-shadow-[0_0_1px_rgba(0,0,0,0.5)]">
        <span className="w-[103px] font-['Liberation_Sans',sans-serif] text-[70px] leading-[64px] font-bold opacity-70">Bai</span>
        <svg viewBox="390 50 280 300" className="h-[100px] w-[93px] shrink-0 opacity-75" fill="currentColor" aria-hidden="true">
          <ellipse cx="428" cy="163" rx="34" ry="43" />
          <ellipse cx="493" cy="97" rx="33" ry="45" />
          <ellipse cx="576" cy="102" rx="35" ry="46" />
          <ellipse cx="629" cy="182" rx="36" ry="45" />
          <path
            fillRule="evenodd"
            d="M525 168C560 168 575 210 600 235C645 265 652 332 605 340C575 345 550 332 525 335C490 342 430 348 415 300C405 260 440 240 462 220C488 195 490 168 525 168ZM500 222H515V322H480C435 322 435 245 480 245H500ZM500 262H484C460 262 460 302 484 302H500ZM535 248H552V300H580V248H597V320H555C540 320 535 312 535 300Z"
          />
        </svg>
        <span className="font-['Noto_Sans_CJK_SC',sans-serif] text-[54px] leading-[68px] font-black whitespace-nowrap opacity-95">经验</span>
      </div>
      <p className="pl-0.5 font-['Noto_Sans',sans-serif] text-[35px] leading-[45px] font-medium whitespace-nowrap opacity-85 drop-shadow-[0_0_1px_rgba(0,0,0,0.5)]">
        jingyan.baidu.com
      </p>
    </div>
  );
}

export default function App() {
  return (
    <div className="flex h-screen flex-col overflow-hidden bg-white">
      <svg className="absolute size-0" aria-hidden="true">
        <defs>
          <linearGradient id="pale" x1="0" y1="0" x2="1" y2="1">
            <stop offset=".1" stopColor="#fff" />
            <stop offset="1" stopColor="#9fc0de" />
          </linearGradient>
          <linearGradient id="dusk" x1="0" y1="0" x2="1" y2="1">
            <stop offset="0" stopColor="#2a3570" />
            <stop offset="1" stopColor="#c2ad32" />
          </linearGradient>
          <linearGradient id="curved" x1="0" y1="0" x2="0" y2="1">
            <stop offset="0" stopColor="#0000ff" />
            <stop offset="1" stopColor="#fff" />
          </linearGradient>
          <radialGradient id="hemi" cx=".5" cy="1" r="1">
            <stop offset=".1" stopColor="#fff" />
            <stop offset="1" stopColor="#0000ff" />
          </radialGradient>
        </defs>
      </svg>
      <div className="h-[219px] shrink-0" />
      <div className="mr-px flex min-h-0 flex-1 flex-col border-t border-r border-l border-[#555] bg-[#f0f0f0]">
        <TitleBar />
        <MenuBar />
        <Toolbars />
        <main className="relative flex min-h-0 flex-1 border-t-2 border-[#8c8c8c] bg-[#ebebeb]">
          <RecoveryPane />
          <DrawToolbar />
          <section className="flex min-w-0 flex-1 bg-black" aria-label="绘图区">
            <Drawing />
            <div className="w-[34px] shrink-0 border-l border-[#d0d0d0]" />
          </section>
          <ModifyToolbars />
          <div className="flex w-[213px] shrink-0">
            <PaletteTabs />
            <ToolPalette />
          </div>
          <Watermark />
        </main>
      </div>
    </div>
  );
}
